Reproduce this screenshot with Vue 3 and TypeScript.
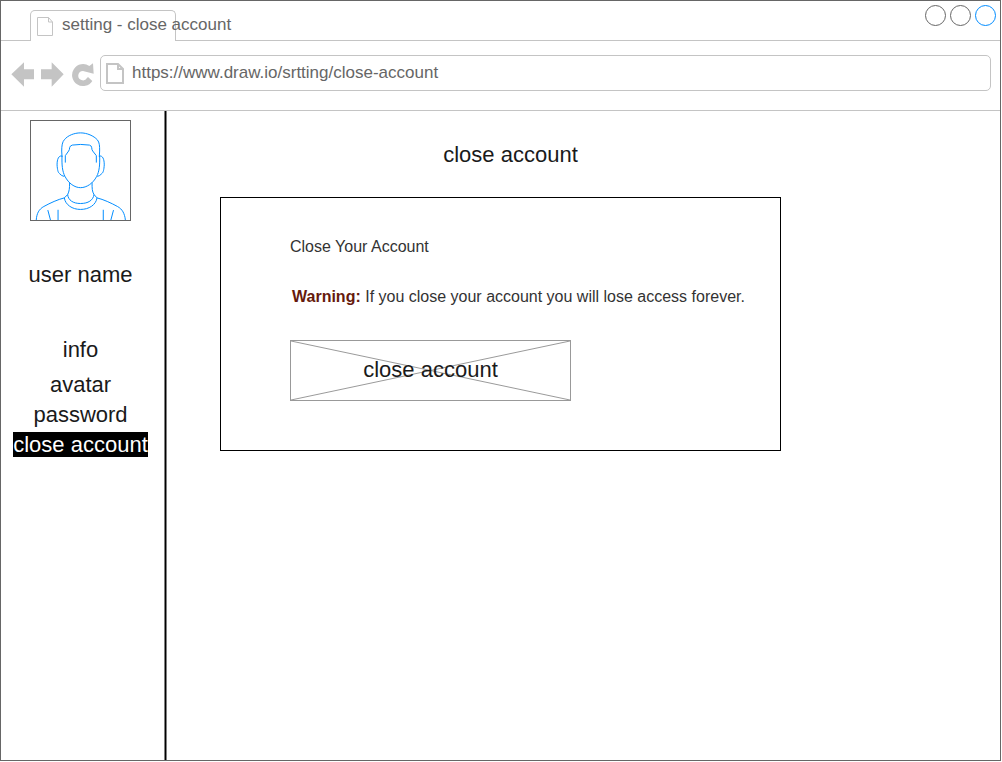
<script setup lang="ts">
import { ref } from 'vue'

interface NavItem {
  label: string
  href: string
  spaced?: boolean
  active?: boolean
}

const url = ref('https://www.draw.io/srtting/close-account')

const navItems: NavItem[] = [
  { label: 'info', href: '#info', spaced: true },
  { label: 'avatar', href: '#avatar' },
  { label: 'password', href: '#password' },
  { label: 'close account', href: '#close-account', active: true },
]

const windowControls = ['Minimize', 'Maximize', 'Close']
</script>

<template>
  <div class="window">
    <header class="tab-bar">
      <div class="tab">
        <svg class="tab-icon" viewBox="0 0 16 19" aria-hidden="true">
          <path d="M.5 .5H11.5L15.5 5V18.5H.5ZM11.5 .5V5H15.5" />
        </svg>
        <span class="tab-title">setting - close account</span>
      </div>
      <div class="controls">
        <button
          v-for="name in windowControls"
          :key="name"
          type="button"
          class="control"
          :class="{ highlight: name === 'Close' }"
          :aria-label="name"
        ></button>
      </div>
    </header>

    <div class="toolbar">
      <div class="history">
        <button type="button" aria-label="Back">
          <svg viewBox="33 186 72 78"><path d="M34 223L72 187V208H102V238H72V260Z" /></svg>
        </button>
        <button type="button" aria-label="Forward">
          <svg viewBox="123 186 72 78"><path d="M191 223L155 187V208H123V238H155V260Z" /></svg>
        </button>
        <button type="button" aria-label="Reload">
          <svg viewBox="213 186 72 78">
            <path
              d="M277 243A33 33 0 1 1 268 198L279 190L281 221L249 213A14 14 0 1 0 261 234L264 231Z"
            />
          </svg>
        </button>
      </div>
      <div class="address">
        <svg class="address-icon" viewBox="0 0 18 21" aria-hidden="true">
          <path d="M1 1H12L17 6V20H1ZM12 1V6H17" />
        </svg>
        <input v-model="url" type="text" aria-label="Address" spellcheck="false" />
      </div>
    </div>

    <div class="page">
      <aside class="sidebar">
        <svg class="avatar" viewBox="31 25 300 300" role="img" aria-label="User avatar">
          <path
            d="M125 134L124 116C124 100 126 88 132 82C142 69 162 61 181 61C201 61 221 70 232 82C239 90 239 102 239 116L238 134"
          />
          <path
            d="M135 151V130L145 116Q148 112 148 106Q149 100 156 98Q181 94 208 98Q215 100 215 106Q215 112 218 116L229 130V151"
          />
          <path
            d="M125 130C124 158 126 178 134 193C145 214 163 227 181 227C200 227 219 214 230 193C238 178 240 158 239 130"
          />
          <path d="M124 131C115 130 110 140 110 158C111 173 113 181 117 184Q124 192 132 193" />
          <path d="M239 131C248 130 253 140 253 158C252 173 250 181 246 184Q239 192 232 193" />
          <path d="M148 212C148 229 147 238 142 248C144 265 158 275 181 275C205 275 219 265 222 248C216 238 216 229 216 212" />
          <path d="M142 248L132 258C135 279 156 293 181 293C207 293 228 279 231 258L222 248" />
          <path d="M132 258C112 263 90 273 70 284C55 292 48 306 47 325" />
          <path d="M231 258C251 263 273 273 293 284C308 292 315 306 317 325" />
          <path d="M82 295L90 325M113 294V325M250 294V325M281 295L273 325" />
        </svg>
        <p class="user-name">user name</p>
        <nav class="nav" aria-label="Settings">
          <a
            v-for="item in navItems"
            :key="item.label"
            :href="item.href"
            :class="{ active: item.active, spaced: item.spaced }"
            :aria-current="item.active ? 'page' : undefined"
            >{{ item.label }}</a
          >
        </nav>
      </aside>

      <main class="content">
        <h1>close account</h1>
        <section class="card">
          <h2>Close Your Account</h2>
          <p class="warning">
            <strong>Warning:</strong> If you close your account you will lose access forever.
          </p>
          <button type="button" class="close-button">
            <svg viewBox="0 0 280 60" preserveAspectRatio="none" aria-hidden="true">
              <path d="M0 0L280 60M0 60L280 0" />
            </svg>
            <span>close account</span>
          </button>
        </section>
      </main>
    </div>
  </div>
</template>

<style>
body {
  margin: 0;
  background: #fff;
}
</style>

<style scoped>
* {
  box-sizing: border-box;
}

.window {
  display: flex;
  flex-direction: column;
  min-height: calc(100vh - 1px);
  margin-right: 1px;
  border: 1px solid #666;
  font-family: 'Liberation Sans', Arial, sans-serif;
  font-size: 22px;
  line-height: 25px;
  color: #1a1a1a;
}

button {
  padding: 0;
  border: 0;
  background: none;
  font: inherit;
  color: inherit;
}

h1,
h2,
p {
  margin: 0;
  font-weight: normal;
}

svg {
  display: block;
}

.tab-bar {
  display: flex;
  justify-content: space-between;
  height: 40px;
  padding: 4px 4px 0 29px;
  border-bottom: 1px solid #c4c4c4;
}

.tab {
  display: flex;
  align-items: center;
  width: 146px;
  height: 31px;
  margin: 5px 0 0;
  padding: 0 0 2px 6px;
  border: 1px solid #c4c4c4;
  border-bottom: 0;
  border-radius: 5px 5px 0 0;
  background: #fff;
}

.tab-icon {
  flex: none;
  width: 16px;
  height: 19px;
  margin-top: 3px;
  fill: none;
  stroke: #c4c4c4;
}

.tab-title {
  margin-left: 9px;
  font-size: 17px;
  line-height: 20px;
  white-space: nowrap;
  color: #666;
}

.controls {
  display: flex;
  gap: 4px;
}

.control {
  width: 21px;
  height: 21px;
  border: 1px solid #666;
  border-radius: 50%;
}

.control.highlight {
  border-color: #008cff;
}

.toolbar {
  display: flex;
  align-items: flex-start;
  padding: 14px 9px 19px 10px;
  border-bottom: 1px solid #c4c4c4;
}

.history {
  display: flex;
  gap: 6px;
  margin-right: 5px;
  padding-top: 7px;
}

.history svg {
  width: 24px;
  height: 26px;
  fill: #c4c4c4;
}

.address {
  display: flex;
  flex: 1;
  align-items: center;
  height: 36px;
  padding: 0 5px;
  border: 1px solid #c4c4c4;
  border-radius: 5px;
}

.address-icon {
  flex: none;
  width: 18px;
  height: 21px;
  fill: none;
  stroke: #c4c4c4;
  stroke-width: 2;
}

.address input {
  flex: 1;
  min-width: 0;
  padding: 0 0 0 8px;
  border: 0;
  outline: 0;
  background: none;
  font: inherit;
  font-size: 17px;
  line-height: 20px;
  color: #666;
}

.page {
  display: flex;
  flex: 1;
}

.sidebar {
  display: flex;
  flex: none;
  flex-direction: column;
  align-items: center;
  width: 166px;
  padding: 9px 7px 0 0;
  background: linear-gradient(to right, #808080 1px, #000 1px 2px, #808080 2px) right / 3px 100% no-repeat;
}

.avatar {
  width: 101px;
  height: 101px;
  border: 1px solid #666;
  fill: none;
  stroke: #008cff;
  stroke-width: 3;
}

.user-name {
  margin-top: 41px;
}

.nav {
  display: flex;
  flex-direction: column;
  align-items: center;
  gap: 5px;
  margin-top: 50px;
}

.nav a {
  color: inherit;
  text-decoration: none;
}

.nav .spaced {
  margin-bottom: 5px;
}

.nav .active {
  background: #000;
  color: #fff;
}

.content {
  flex: 1;
  padding: 31px 53px;
}

h1 {
  max-width: 581px;
  font-size: 22px;
  text-align: center;
}

.card {
  max-width: 561px;
  margin-top: 30px;
  padding: 40px 30px 49px 69px;
  border: 1px solid #000;
  font-size: 16px;
  line-height: 18px;
  color: #333;
}

h2 {
  font-size: 16px;
}

.warning {
  margin: 32px 0 34px;
  padding-left: 2px;
}

.warning strong {
  color: #661a0d;
}

.close-button {
  display: grid;
  width: 281px;
  height: 61px;
  border: 1px solid #999;
  font-size: 22px;
  line-height: 25px;
  color: #1a1a1a;
}

.close-button > * {
  grid-area: 1 / 1;
}

.close-button svg {
  width: 100%;
  height: 59px;
  fill: none;
  stroke: #999;
}

.close-button span {
  align-self: center;
  padding-bottom: 2px;
}
</style>
